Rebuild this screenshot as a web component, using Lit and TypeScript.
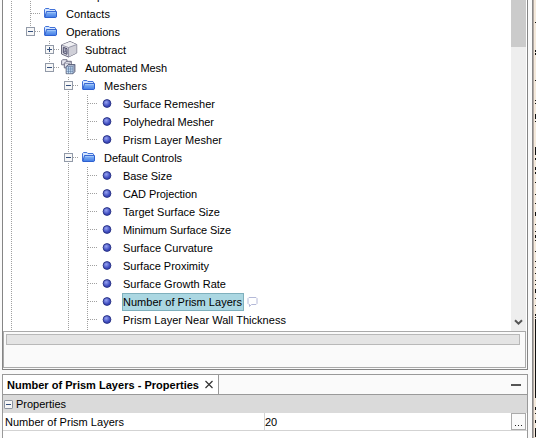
import { LitElement, html, css, svg } from "lit";
import { customElement, property } from "lit/decorators.js";

type Icon = "folder" | "ball" | "cube" | "mesh";
interface Node {
  label: string;
  depth: number;
  icon: Icon;
  box?: "+" | "-";
  last?: boolean;
  guides: number[];
  selected?: boolean;
  width: number;
}

const NODES: Node[] = [
  { label: "Descriptions", depth: 1, icon: "folder", guides: [0], width: 60 },
  { label: "Contacts", depth: 1, icon: "folder", guides: [0], width: 44 },
  { label: "Operations", depth: 1, icon: "folder", box: "-", last: true, guides: [0], width: 54 },
  { label: "Subtract", depth: 2, icon: "cube", box: "+", guides: [0], width: 41 },
  { label: "Automated Mesh", depth: 2, icon: "mesh", box: "-", last: true, guides: [0], width: 82 },
  { label: "Meshers", depth: 3, icon: "folder", box: "-", guides: [0], width: 43 },
  { label: "Surface Remesher", depth: 4, icon: "ball", guides: [0, 3], width: 92 },
  { label: "Polyhedral Mesher", depth: 4, icon: "ball", guides: [0, 3], width: 91 },
  { label: "Prism Layer Mesher", depth: 4, icon: "ball", last: true, guides: [0, 3], width: 99 },
  { label: "Default Controls", depth: 3, icon: "folder", box: "-", guides: [0], width: 78 },
  { label: "Base Size", depth: 4, icon: "ball", guides: [0, 3], width: 49 },
  { label: "CAD Projection", depth: 4, icon: "ball", guides: [0, 3], width: 74 },
  { label: "Target Surface Size", depth: 4, icon: "ball", guides: [0, 3], width: 97 },
  { label: "Minimum Surface Size", depth: 4, icon: "ball", guides: [0, 3], width: 108 },
  { label: "Surface Curvature", depth: 4, icon: "ball", guides: [0, 3], width: 90 },
  { label: "Surface Proximity", depth: 4, icon: "ball", guides: [0, 3], width: 86 },
  { label: "Surface Growth Rate", depth: 4, icon: "ball", guides: [0, 3], width: 103 },
  { label: "Number of Prism Layers", depth: 4, icon: "ball", guides: [0, 3], selected: true, width: 119 },
  { label: "Prism Layer Near Wall Thickness", depth: 4, icon: "ball", guides: [0, 3], width: 163 },
];

const folder = svg`
  <path d="M2.500 12V4.500l1-1h3.400l1 1h5.100l.5.600v2" fill="#d3e5ff" stroke="#4272d8"/>
  <path d="M2.800 12.500 4.500 6.500h10v5.400l-.7.600z" fill="url(#fg)" stroke="#2e60d0"/>
  <path d="M5.200 7.400h8.500" stroke="#a9ccfa" stroke-width=".8"/>`;
const cube = svg`
  <path d="M.5 4 9 .5 15.700 3.500V12L7.500 16 .5 13z" fill="#e0e0e6" stroke="#5c5c70" stroke-width=".9"/>
  <path d="M.7 4 9 .7 15.500 3.500 7.500 6.500z" fill="#f0f0f3"/>
  <path d="M7.500 6.500v9.400l8-4V3.600z" fill="#d0d0d8"/>
  <path d="M.7 4.100 7.500 6.500 15.500 3.600M7.500 6.500V16" stroke="#85859a" stroke-width=".8" fill="none"/>
  <path d="M2.300 6.300 6 7.700v5.600L2.300 11.800z" fill="#bcbccc" stroke="#50506c" stroke-width="1"/>
  <path d="M4.300 7.300v3.200l1.700.8M4.300 10.400l-2 .9" stroke="#50506c" stroke-width=".7" fill="none"/>`;
const mesh = svg`
  <path d="M.6 1.800 1.600.7H6v4L5 5.800H.6z" fill="#e6e6ee" stroke="#6a6a80" stroke-width=".9"/>
  <path d="M3.300 4.300 5.300 2.300h5v4.600l-2 2h-5z" fill="#e6e6ee" stroke="#606078" stroke-width=".9"/>
  <path d="M3.300 4.300h5v4.600M8.300 4.300l2-2" stroke="#77778c" stroke-width=".6" fill="none"/>
  <path d="M5.200 7.700 7.200 5.600h6.700v7L12 14.700H5.200z" fill="#b6c0d4" stroke="#4d5069" stroke-width=".9"/>
  <path d="M5.700 8.100H11.600v6.200H5.700z" fill="#c9e3f8"/>
  <path d="M7.500 7.700v7M9.700 7.700v7M12 7.700v7M5.200 10h6.800M5.200 12.300h6.800M5.200 7.700H12l1.900-2.100" stroke="#56709a" stroke-width=".6" fill="none"/>`;

@customElement("expand-box")
class ExpandBox extends LitElement {
  static styles = css`
    :host { display: block; width: 9px; height: 9px; }
    svg { display: block; }
  `;
  render() {
    return html`<svg width="9" height="9" fill="none">
      <rect x=".5" y=".5" width="8" height="8" rx=".6" fill="#f6f6f6" stroke="#8b93a0"/>
      <path d="M2 4.500h5" stroke="#34507e"/>
    </svg>`;
  }
}

@customElement("tree-row")
class TreeRow extends LitElement {
  @property({ attribute: false }) node!: Node;
  static styles = css`
    :host { display: block; }
    .row { display: flex; height: 18px; }
    .gutter, .icon { display: block; flex: none; }
    .icon { margin-right: 5px; }
    .label { height: 18px; line-height: 18px; white-space: pre; display: block; }
    .selected { background: #abd7e2; box-shadow: inset 0 0 0 1px #7fb0bd; margin-left: -1px; padding-left: 1px; padding-right: 2px; }
    .bubble { margin: 3px 0 0 2px; }
  `;
  render() {
    const n = this.node;
    const w = 19 * (n.depth + 1) - 1;
    const x = 8.5 + 19 * n.depth;
    const icons = {
      folder,
      cube,
      mesh,
      ball: svg`<circle cx="8" cy="8.500" r="3.900" fill="url(#bg)" stroke="#27307f" stroke-width=".9"/>`,
    };
    return html`<div class="row">
      <svg class="gutter" width=${w} height="18" fill="none" stroke="#a0a0a0" stroke-dasharray="1 1" shape-rendering="crispEdges">
        ${n.guides.map((g) => svg`<path d="M${8.5 + 19 * g} 0v18"/>`)}
        <path d="M${x} 0v${n.last ? 9 : 18}"/>
        <path d="M${x} 8.500H${w}"/>
        ${n.box
          ? svg`<g stroke-dasharray="none">
              <rect x=${x - 4} y="4.500" width="8" height="8" fill="#f7f7f7" stroke="#929aa8"/>
              <path d="M${x - 2.5} 8.500h5" stroke="#34507e"/>
              ${n.box === "+" ? svg`<path d="M${x} 6v5" stroke="#34507e"/>` : ""}
            </g>`
          : ""}
      </svg>
      <svg class="icon" width="21" height="18" viewBox="-2 0 21 18" fill="none">
        <defs>
          <linearGradient id="fg" x2="0" y2="1"><stop stop-color="#8fbdf6"/><stop offset="1" stop-color="#3f7ae6"/></linearGradient>
          <radialGradient id="bg" cx=".4" cy=".35"><stop stop-color="#98a4f2"/><stop offset="1" stop-color="#3a48bd"/></radialGradient>
        </defs>
        ${icons[n.icon]}
      </svg>
      <fitted-text class="label ${n.selected ? "selected" : ""}" .text=${n.label} .width=${n.width}></fitted-text>
      ${n.selected
        ? html`<svg class="bubble" width="13" height="12" fill="none"><path d="M3 1.500h7l1 1v5l-1 1H5.500L3.500 10.500V8.500H3l-1-1v-5z" stroke="#b4b9d8"/></svg>`
        : ""}
    </div>`;
  }
}

@customElement("fitted-text")
class FittedText extends LitElement {
  @property() text = "";
  @property({ type: Number }) width = 0;
  static styles = css`
    :host { display: block; white-space: pre; }
    span { display: inline-block; }
  `;
  render() {
    return html`<span>${this.text}</span>`;
  }
  updated() {
    const span = this.renderRoot.querySelector("span")!;
    span.style.letterSpacing = "0";
    const natural = span.getBoundingClientRect().width;
    span.style.letterSpacing = (this.width - natural) / this.text.length + "px";
  }
}

const MARKS: number[][] = [
  [22, 1], [50, 2], [53, 2], [80, 1], [100, 1], [103, 1], [114, 5], [121, 1], [147, 8], [158, 2], [167, 3], [172, 2],
  [182, 1], [194, 1], [203, 1], [212, 4], [224, 1], [231, 1], [235, 3], [240, 1], [251, 1], [261, 1], [267, 1],
  [273, 1], [280, 1], [284, 1], [289, 4], [298, 1], [305, 1], [314, 2], [317, 1], [319, 79], [407, 3], [413, 1], [420, 3], [428, 9],
];

@customElement("app-root")
class AppRoot extends LitElement {
  static styles = css`
    :host { display: block; width: 536px; height: 438px; overflow: hidden; font: 11px/18px "Liberation Sans", Arial, sans-serif; color: #000; background: #fafafa; }
    .page { display: flex; height: 438px; }
    .main { width: 526px; margin-left: 2px; display: flex; flex-direction: column; gap: 4px; flex: none; }
    .explorer { box-sizing: border-box; height: 370px; border: 1px solid #858585; border-top: 0; display: flex; flex-direction: column; background: #fafafa; flex: none; }
    .view { display: flex; height: 331px; overflow: hidden; background: #fff; flex: none; }
    .tree { flex: 1; margin-top: -13px; }
    .tail { display: block; }
    .scroll { width: 15px; margin-right: 1px; background: #eee; display: flex; flex-direction: column; justify-content: space-between; }
    .thumb { height: 47px; background: #cbcbcb; }
    .down { display: block; margin: 0 0 5px 3px; }
    .status { box-sizing: border-box; height: 37px; margin-right: 1px; border: 1px solid #aaa; padding: 2px 5px 0 2px; }
    .bar { box-sizing: border-box; height: 11px; background: #e4e4e4; border: 1px solid #b8b8b8; }
    .props { border: 1px solid #999; border-bottom: 0; flex: 1; background: #fff; }
    .tabs { display: flex; height: 19px; border-bottom: 1px solid #999; background: #fafafa; justify-content: space-between; }
    .tab { box-sizing: border-box; width: 216px; border-right: 1px solid #999; display: flex; padding-left: 4px; justify-content: space-between; font-weight: bold; background: #fff; }
    .title { margin-top: 1px; }
    .close { margin: 5px 4px 0 0; }
    .min { width: 10px; height: 2px; background: #555; margin: 9px 6px 0 0; }
    .section { height: 18px; background: #dadada; display: flex; }
    .section expand-box { margin: 5px 3px 0 1px; }
    .prop { display: flex; height: 17px; border-bottom: 1px solid #d3d3d3; }
    .name { box-sizing: border-box; width: 262px; padding-left: 2px; border-right: 1px solid #d3d3d3; }
    .value { flex: 1; }
    .more { box-sizing: border-box; width: 15px; height: 17px; margin-right: 1px; border: 1px solid #aaa; background: #fafafa; display: flex; gap: 2px; padding: 11px 0 0 3px; }
    .dot { width: 1px; height: 1px; background: #222; }
    .edge { display: block; margin-left: 4px; }
  `;
  render() {
    return html`<div class="page">
      <div class="main">
        <div class="explorer">
          <div class="view">
            <div class="tree">
              ${NODES.map((n) => html`<tree-row .node=${n}></tree-row>`)}
              <svg class="tail" width="94" height="18" stroke="#a0a0a0" stroke-dasharray="1 1" shape-rendering="crispEdges">
                <path d="M8.500 0v18M65.500 0v18M84.500 0v18"/>
              </svg>
            </div>
            <div class="scroll">
              <div class="thumb"></div>
              <svg class="down" width="9" height="7" fill="none"><path d="M1 1.200 4.500 4.700 8 1.200" stroke="#555" stroke-width="2"/></svg>
            </div>
          </div>
          <div class="status"><div class="bar"></div></div>
        </div>
        <div class="props">
          <div class="tabs">
            <div class="tab">
              <fitted-text class="title" .text=${"Number of Prism Layers - Properties"} .width=${192}></fitted-text>
              <svg class="close" width="10" height="10"><path d="M1.500 1 8.500 8M8.500 1 1.500 8" stroke="#333" stroke-width="1.200"/></svg>
            </div>
            <div class="min"></div>
          </div>
          <div class="section">
            <expand-box></expand-box>
            <fitted-text .text=${"Properties"} .width=${50}></fitted-text>
          </div>
          <div class="prop">
            <fitted-text class="name" .text=${"Number of Prism Layers"} .width=${119}></fitted-text>
            <fitted-text class="value" .text=${"20"} .width=${12}></fitted-text>
            <div class="more"><div class="dot"></div><div class="dot"></div><div class="dot"></div></div>
          </div>
        </div>
      </div>
      <svg class="edge" width="4" height="438" shape-rendering="crispEdges">
        <rect width="1" height="438" fill="#888"/>
        <rect x="1" width="1" height="438" fill="#b3aaa5"/>
        <rect x="2" width="2" height="438" fill="#f5eadc"/>
        ${MARKS.map(([y, h]) => svg`<rect x="3" y=${y} width="1" height=${h} fill="#111"/>`)}
      </svg>
    </div>`;
  }
}
